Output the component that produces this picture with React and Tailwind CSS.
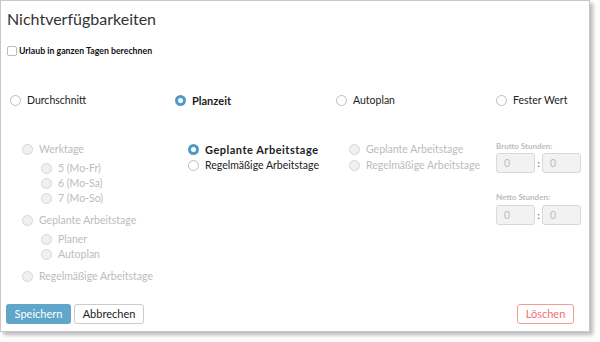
import React from "react";

const font = { fontFamily: 'Lato, "Open Sans", sans-serif' };

function Radio({ checked, disabled }) {
  if (checked)
    return <span className="inline-block w-[11px] h-[11px] rounded-full border-[3px] border-[#4d9bc6] bg-white shrink-0" />;
  if (disabled)
    return <span className="inline-block w-[11px] h-[11px] rounded-full border border-[#d6d6d6] bg-[#f0f0f0] shrink-0" />;
  return <span className="inline-block w-[11px] h-[11px] rounded-full border border-[#bdbdbd] bg-white shrink-0" />;
}

function Opt({ label, checked, disabled, bold, wide, className = "" }) {
  return (
    <div className={"flex items-center gap-[6px] h-[15px] " + className}>
      <Radio checked={checked} disabled={disabled} />
      <span
        className={
          "leading-[15px] whitespace-nowrap " +
          (disabled ? "text-[#bcbcbc]" : "text-[#222]") +
          (bold ? " font-bold text-[11px]" : " text-[10.5px]") +
          (wide ? " tracking-[0.5px]" : "")
        }
      >
        {label}
      </span>
    </div>
  );
}

function TimeInputs({ className = "" }) {
  return (
    <div className={"flex items-center " + className}>
      <div className="w-[39px] h-[20px] rounded-[3px] border border-[#d8d8d8] bg-[#f2f2f2] text-[10.5px] text-[#bcbcbc] pl-[7px] leading-[18px]">0</div>
      <span className="w-[7px] text-center text-[10px] text-[#777] font-bold leading-[18px]">:</span>
      <div className="w-[39px] h-[20px] rounded-[3px] border border-[#d8d8d8] bg-[#f2f2f2] text-[10.5px] text-[#bcbcbc] pl-[7px] leading-[18px]">0</div>
    </div>
  );
}

export default function App() {
  return (
    <div className="w-[600px] h-[342px] bg-white" style={font}>
      <div className="w-[590px] h-[332px] bg-white border border-[#c8c8c8] shadow-[3px_3px_4px_rgba(0,0,0,0.28)] flex flex-col relative">
        <div className="pl-[6px] pt-[5px] text-[16px] leading-[26px] text-[#333]">Nichtverfügbarkeiten</div>
        <div className="flex items-center pl-[6px] mt-[13px] gap-[2px]">
          <span className="w-[10px] h-[10px] rounded-[2px] border border-[#bbb] bg-white" />
          <span className="text-[8.75px] font-bold text-[#111] leading-[12px]">Urlaub in ganzen Tagen berechnen</span>
        </div>
        <div className="flex mt-[36px] pl-[9px]">
          <div className="w-[165px]"><Opt label="Durchschnitt" /></div>
          <div className="w-[161px]"><Opt label="Planzeit" checked bold /></div>
          <div className="w-[160px]"><Opt label="Autoplan" /></div>
          <div><Opt label="Fester Wert" /></div>
        </div>
        <div className="flex mt-[34px]">
          <div className="w-[187px] pl-[21px]">
            <Opt label="Werktage" disabled />
            <div className="pl-[19px] mt-[4px]">
              <Opt label="5 (Mo-Fr)" disabled />
              <Opt label="6 (Mo-Sa)" disabled />
              <Opt label="7 (Mo-So)" disabled />
            </div>
            <Opt label="Geplante Arbeitstage" disabled className="mt-[7px]" />
            <div className="pl-[19px] mt-[4px]">
              <Opt label="Planer" disabled />
              <Opt label="Autoplan" disabled />
            </div>
            <Opt label="Regelmäßige Arbeitstage" disabled className="mt-[7px]" />
          </div>
          <div className="w-[161px]">
            <Opt label="Geplante Arbeitstage" checked bold wide />
            <Opt label="Regelmäßige Arbeitstage" className="mt-px" />
          </div>
          <div className="w-[147px]">
            <Opt label="Geplante Arbeitstage" disabled />
            <Opt label="Regelmäßige Arbeitstage" disabled className="mt-px" />
          </div>
          <div className="-mt-[2px]">
            <div className="text-[8px] font-bold text-[#bcbcbc] leading-[12px]">Brutto Stunden:</div>
            <TimeInputs className="mt-px" />
            <div className="text-[8px] font-bold text-[#bcbcbc] leading-[12px] mt-[18px]">Netto Stunden:</div>
            <TimeInputs className="mt-[2px]" />
          </div>
        </div>
        <div className="mt-auto mb-[7px] px-[5px] flex items-center">
          <button className="h-[20px] w-[65px] rounded-[3px] bg-[#5fa6ca] text-white text-[11px]">Speichern</button>
          <button className="ml-[3px] h-[20px] w-[70px] rounded-[3px] border border-[#ccc] bg-white text-[#222] text-[11px]">Abbrechen</button>
          <button className="ml-auto mr-[10px] h-[20px] w-[57px] rounded-[3px] border border-[#f59a9a] bg-white text-[#f07070] text-[11px]">Löschen</button>
        </div>
      </div>
    </div>
  );
}
